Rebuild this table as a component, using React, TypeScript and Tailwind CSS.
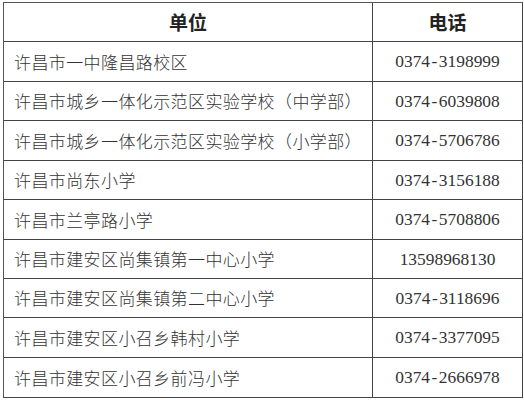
import React from 'react';

const rows: { name: string; phone: string; h: string }[] = [
  { name: '许昌市一中隆昌路校区', phone: '0374-3198999', h: 'h-[40px]' },
  { name: '许昌市城乡一体化示范区实验学校（中学部）', phone: '0374-6039808', h: 'h-[39px]' },
  { name: '许昌市城乡一体化示范区实验学校（小学部）', phone: '0374-5706786', h: 'h-[40px]' },
  { name: '许昌市尚东小学', phone: '0374-3156188', h: 'h-[39px]' },
  { name: '许昌市兰亭路小学', phone: '0374-5708806', h: 'h-[40px]' },
  { name: '许昌市建安区尚集镇第一中心小学', phone: '13598968130', h: 'h-[39px]' },
  { name: '许昌市建安区尚集镇第二中心小学', phone: '0374-3118696', h: 'h-[39px]' },
  { name: '许昌市建安区小召乡韩村小学', phone: '0374-3377095', h: 'h-[40px]' },
  { name: '许昌市建安区小召乡前冯小学', phone: '0374-2666978', h: 'h-[40px]' },
];

const cjk = "font-['Noto_Sans_CJK_SC',sans-serif]";
const digits = "font-['Liberation_Serif','Noto_Sans_CJK_SC',serif]";

function Phone({ value }: { value: string }) {
  const parts = value.split('-');
  if (parts.length < 2) return <>{value}</>;
  return (
    <>
      {parts[0]}
      <span className="mx-[1.5px]">-</span>
      {parts[1]}
    </>
  );
}

export default function App() {
  return (
    <div className="w-[524px] h-[400px] bg-white pt-[2px] pl-[3px]">
      <div className="w-[520px] border-l border-t border-[#555] text-[#333]">
        <div className="flex h-[39px]">
          <div className={`w-[369px] flex items-center justify-center border-r border-b border-[#444] text-[19px] font-bold text-[#222] ${cjk}`}>
            单位
          </div>
          <div className={`w-[150px] flex items-center justify-center border-r border-b border-[#444] text-[19px] font-bold text-[#222] ${cjk}`}>
            电话
          </div>
        </div>
        {rows.map((r) => (
          <div key={r.name} className={`flex ${r.h}`}>
            <div className={`w-[369px] flex items-center pl-[10px] border-r border-b border-[#444] text-[17px] font-light tracking-[0.4px] ${cjk}`}>
              {r.name}
            </div>
            <div className={`w-[150px] flex items-center justify-center border-r border-b border-[#444] text-[17.4px] ${digits}`}>
              <Phone value={r.phone} />
            </div>
          </div>
        ))}
      </div>
    </div>
  );
}
